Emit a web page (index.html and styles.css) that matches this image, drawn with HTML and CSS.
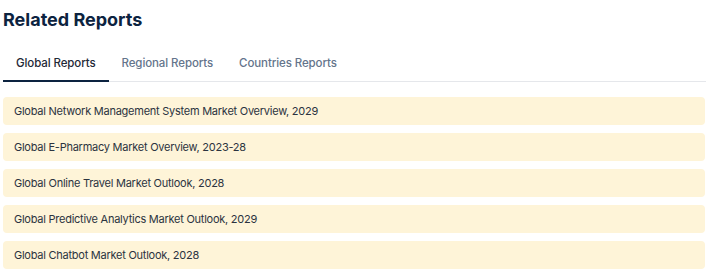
FILE: index.html
```html
<!DOCTYPE html>
<html lang="en">
<head>
    <meta charset="UTF-8">
    <title>Related Reports</title>
    <link rel="stylesheet" href="styles.css">
</head>
<body>
    <section class="related">
        <h2 class="related-title">Related Reports</h2>

        <div class="tabs">
            <button type="button" class="tab active">Global Reports</button>
            <button type="button" class="tab">Regional Reports</button>
            <button type="button" class="tab">Countries Reports</button>
        </div>

        <ul class="report-list">
            <li class="report-item">Global Network Management System Market Overview, 2029</li>
            <li class="report-item">Global E-Pharmacy Market Overview, 2023-28</li>
            <li class="report-item">Global Online Travel Market Outlook, 2028</li>
            <li class="report-item">Global Predictive Analytics Market Outlook, 2029</li>
            <li class="report-item">Global Chatbot Market Outlook, 2028</li>
        </ul>
    </section>
</body>
</html>
```

FILE: styles.css
```css
body {
    margin: 0;
    font-family: Inter, "Noto Sans", Arial, sans-serif;
    background-color: #ffffff;
}

.related {
    padding: 9px 1px 0 3px;
}

.related-title {
    margin: 0 0 14px 0;
    font-size: 18px;
    line-height: 22px;
    font-weight: 700;
    color: #0c2340;
}

.tabs {
    display: flex;
    border-bottom: 1px solid #e5e7eb;
    margin-right: -1px;
}

.tab {
    padding: 10px 13px 9px 13px;
    border: none;
    border-bottom: 2px solid transparent;
    margin-bottom: -1px;
    background: none;
    font-family: inherit;
    font-size: 11.5px;
    line-height: 16px;
    font-weight: 500;
    letter-spacing: -0.1px;
    color: #64748b;
    cursor: pointer;
}

.tab.active {
    color: #1f2937;
    border-bottom-color: #0c2340;
}

.report-list {
    list-style: none;
    margin: 15px 0 0 0;
    padding: 0;
    display: flex;
    flex-direction: column;
    gap: 8px;
}

.report-item {
    height: 28px;
    padding: 0 11px;
    display: flex;
    align-items: center;
    background-color: #fef4d8;
    border-radius: 4px;
    font-size: 11px;
    letter-spacing: -0.25px;
    color: #2b3340;
}
```
